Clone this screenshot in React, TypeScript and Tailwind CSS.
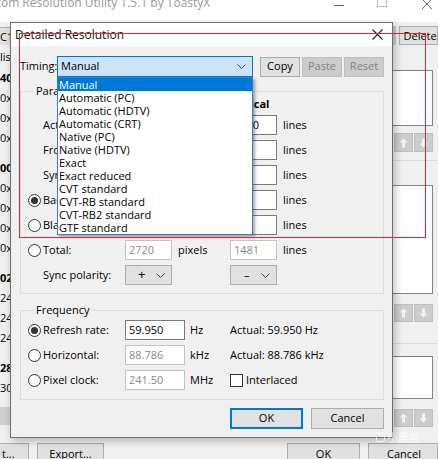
import React from 'react';

const timings = [
  'Manual',
  'Automatic (PC)',
  'Automatic (HDTV)',
  'Automatic (CRT)',
  'Native (PC)',
  'Native (HDTV)',
  'Exact',
  'Exact reduced',
  'CVT standard',
  'CVT-RB standard',
  'CVT-RB2 standard',
  'GTF standard',
];

const paramRows = [
  { label: 'Active:', h: '2560', v: '1440' },
  { label: 'Front porch:', h: '48', v: '3' },
  { label: 'Sync width:', h: '32', v: '5' },
  { label: 'Back porch:', h: '80', v: '33', radio: true, checked: true },
  { label: 'Blanking:', h: '160', v: '41', radio: true },
];

function Radio({ checked }: { checked?: boolean }) {
  return (
    <span className="w-[13px] h-[13px] rounded-full border border-[#333] bg-white flex items-center justify-center shrink-0">
      {checked && <span className="w-[7px] h-[7px] rounded-full bg-[#333]" />}
    </span>
  );
}

function Chevron() {
  return (
    <svg width="9" height="5" viewBox="0 0 9 5" className="shrink-0">
      <path d="M0.5 0.5 L4.5 4.5 L8.5 0.5" fill="none" stroke="#444" strokeWidth="1" />
    </svg>
  );
}

function Field({ value, w, disabled }: { value: string; w: string; disabled?: boolean }) {
  return (
    <div
      className={`h-[20px] ${w} bg-white border flex items-center pl-[3px] ${
        disabled ? 'border-[#c4c4c4] text-[#8a8a8a]' : 'border-[#7a7a7a] text-black'
      }`}
    >
      {value}
    </div>
  );
}

function Arrow({ down }: { down?: boolean }) {
  return (
    <div className="w-[19px] h-full bg-[#cccccc] border border-[#bfbfbf] flex items-center justify-center">
      <svg width="9" height="10" viewBox="0 0 9 10" className={down ? 'rotate-180' : ''}>
        <path d="M4.5 0.5 L8.5 4.5 L6 4.5 L6 9.5 L3 9.5 L3 4.5 L0.5 4.5 Z" fill="#f2f2f2" />
      </svg>
    </div>
  );
}

function Legend({ children }: { children: React.ReactNode }) {
  return <legend className="ml-[6px] px-[2px] leading-[14px]">{children}</legend>;
}

export default function App() {
  return (
    <div className="relative w-[438px] h-[459px] overflow-hidden bg-[#f0f0f0] text-[11px] text-black font-['Open_Sans','Noto_Sans',sans-serif]">
      {/* background window */}
      <div className="flex flex-col h-full">
        <div className="h-[22px] bg-white flex items-start overflow-hidden">
          <span className="-mt-[6px] -ml-[24px] text-[12px] text-[#999] whitespace-nowrap">
            Custom Resolution Utility 1.5.1 by ToastyX
          </span>
          <div className="ml-auto flex items-start">
            <div className="mt-[5px] w-[10px] h-px bg-[#666]" />
            <div className="ml-[33px] -mt-[3px] w-[10px] h-[10px] border border-[#bbb]" />
            <svg width="10" height="10" viewBox="0 0 10 10" className="ml-[35px] mr-[6px] -mt-[1px]">
              <path d="M0 0 L10 10 M10 0 L0 10" stroke="#666" strokeWidth="1" />
            </svg>
          </div>
        </div>

        <div className="flex-1 flex">
          {/* left column */}
          <div className="w-[10px] flex flex-col whitespace-nowrap">
            <div className="mt-[5px] h-[18px] bg-[#e1e1e1] border-t border-[#adadad] leading-[17px]">C1</div>
            <div className="mt-[2px] h-[20px] leading-[20px]">lished resolutions</div>
            <div className="mt-[1px] h-[20px] leading-[20px] font-bold">40 (native)</div>
            <div className="h-[20px] leading-[20px]">0x1440 @ 59.950 Hz</div>
            <div className="h-[20px] leading-[20px]">0x1440 @ 144 Hz</div>
            <div className="h-[20px] leading-[20px]">0x1440 @ 120 Hz</div>
            <div className="mt-[10px] h-[20px] leading-[20px] font-bold">00 Hz</div>
            <div className="h-[20px] leading-[20px]">0x1080 @ 60 Hz</div>
            <div className="h-[20px] leading-[20px]">0x1080 @ 75 Hz</div>
            <div className="h-[20px] leading-[20px]">0x1200 @ 60 Hz</div>
            <div className="h-[20px] leading-[20px]">0x1050 @ 60 Hz</div>
            <div className="mt-[10px] h-[20px] leading-[20px] font-bold">02 Hz</div>
            <div className="h-[20px] leading-[20px]">24x768 @ 60 Hz</div>
            <div className="h-[20px] leading-[20px]">24x768 @ 70 Hz</div>
            <div className="h-[20px] leading-[20px]">24x768 @ 75 Hz</div>
            <div className="mt-[10px] h-[20px] leading-[20px] font-bold">28 Hz</div>
            <div className="h-[20px] leading-[20px]">30x600 @ 60 Hz</div>
            <div className="mt-[9px] h-[18px] bg-[#d0d0d0]" />
          </div>

          <div className="flex-1" />

          {/* right column */}
          <div className="w-[46px] flex flex-col">
            <div className="mt-[4px] h-[19px] flex">
              <div className="-ml-[20px] w-[27px] bg-[#cccccc]" />
              <div className="ml-[3px] w-[42px] bg-[#e1e1e1] border border-[#adadad] pl-[3px] leading-[17px] whitespace-nowrap">
                Delete
              </div>
            </div>
            <div className="mt-[25px] -ml-[20px] w-[61px] h-[56px] bg-white border border-[#828282]" />
            <div className="mt-[7px] ml-[2px] h-[19px] flex gap-[1px]">
              <Arrow />
              <Arrow down />
            </div>
            <div className="mt-[8px] h-px bg-[#dadada]" />
            <div className="mt-[24px] -ml-[20px] w-[61px] h-[109px] bg-white border border-[#828282]" />
            <div className="mt-[10px] ml-[2px] h-[18px] flex gap-[1px]">
              <Arrow />
              <Arrow down />
            </div>
            <div className="mt-[21px] h-px bg-[#dadada]" />
            <div className="mt-[12px] -ml-[20px] w-[61px] h-[43px] bg-white border border-[#828282]" />
            <div className="mt-[10px] ml-[2px] h-[18px] flex gap-[1px]">
              <Arrow />
              <Arrow down />
            </div>
          </div>
        </div>

        <div className="h-[16px] flex items-start">
          <div className="-ml-px w-[30px] h-[23px] bg-[#e1e1e1] border border-[#adadad] pl-[2px] leading-[20px]">t...</div>
          <div className="ml-[8px] w-[67px] h-[23px] bg-[#e1e1e1] border border-[#adadad] text-center leading-[20px]">Export...</div>
          <div className="ml-auto w-[73px] h-[23px] bg-[#e1e1e1] border border-[#adadad] text-center leading-[20px]">OK</div>
          <div className="ml-[8px] w-[70px] h-[23px] bg-[#e1e1e1] border border-[#adadad] pl-[18px] leading-[20px]">Cancel</div>
        </div>
      </div>

      {/* dialog window */}
      <div className="absolute left-[10px] top-[22px] w-[383px] h-[416px] border border-[#6e6e6e] bg-[#f0f0f0] flex flex-col shadow-[2px_3px_8px_rgba(0,0,0,0.25)]">
        <div className="h-[23px] bg-white flex items-center pl-[4px]">
          <span className="text-[12px] text-[#111]">Detailed Resolution</span>
          <svg width="11" height="11" viewBox="0 0 11 11" className="ml-auto mr-[9px]">
            <path d="M0.5 0.5 L10.5 10.5 M10.5 0.5 L0.5 10.5" stroke="#222" strokeWidth="1.1" />
          </svg>
        </div>

        <div className="flex-1 flex flex-col pl-[9px]">
          {/* timing row */}
          <div className="mt-[10px] h-[21px] flex items-center">
            <span className="w-[37px]">Timing:</span>
            <div className="relative w-[196px] h-[21px]">
              <div className="h-full bg-[#cce4f7] border border-[#0078d7] flex items-center pl-[3px] pr-[6px]">
                <span className="flex-1">Manual</span>
                <Chevron />
              </div>
              <div className="absolute top-[21px] left-0 w-[196px] bg-white border border-[#3c7fc0] shadow-[2px_2px_3px_rgba(0,0,0,0.35)] z-10">
                {timings.map((t, i) => (
                  <div
                    key={t}
                    className={`h-[13px] leading-[13px] pl-[1px] whitespace-nowrap ${
                      i === 0 ? 'bg-[#0078d7] text-white' : ''
                    }`}
                  >
                    {t}
                  </div>
                ))}
              </div>
            </div>
            <div className="ml-[7px] w-[40px] h-[20px] bg-[#e1e1e1] border border-[#adadad] flex items-center justify-center">Copy</div>
            <div className="ml-[2px] w-[40px] h-[20px] bg-[#cccccc] border border-[#bfbfbf] text-[#838383] flex items-center justify-center">Paste</div>
            <div className="ml-[2px] w-[40px] h-[20px] bg-[#cccccc] border border-[#bfbfbf] text-[#838383] flex items-center justify-center">Reset</div>
          </div>

          {/* parameters */}
          <fieldset className="mt-[7px] w-[364px] border border-[#dcdcdc] pl-[7px] pb-[8px]">
            <Legend>Parameters</Legend>
            <div className="grid grid-cols-[97px_47px_58px_47px_1fr] items-center">
              <div className="h-[12px]" />
              <div className="font-bold leading-[12px]">Horizontal</div>
              <div />
              <div className="-ml-[3px] font-bold leading-[12px]">Vertical</div>
              <div />
            </div>
            <div className="mt-[5px] flex flex-col gap-[5px]">
              {paramRows.map((r) => (
                <div key={r.label} className="grid grid-cols-[97px_47px_58px_47px_1fr] items-center h-[20px]">
                  {r.radio ? (
                    <div className="flex items-center gap-[2px]">
                      <Radio checked={r.checked} />
                      <span>{r.label}</span>
                    </div>
                  ) : (
                    <span className="pl-[15px]">{r.label}</span>
                  )}
                  <Field value={r.h} w="w-[47px]" />
                  <span className="pl-[6px]">pixels</span>
                  <Field value={r.v} w="w-[47px]" />
                  <span className="pl-[6px]">lines</span>
                </div>
              ))}
              <div className="grid grid-cols-[97px_47px_58px_47px_1fr] items-center h-[20px]">
                <div className="flex items-center gap-[2px]">
                  <Radio />
                  <span>Total:</span>
                </div>
                <Field value="2720" w="w-[47px]" disabled />
                <span className="pl-[6px]">pixels</span>
                <Field value="1481" w="w-[47px]" disabled />
                <span className="pl-[6px]">lines</span>
              </div>
              <div className="grid grid-cols-[97px_47px_58px_47px_1fr] items-center h-[20px]">
                <span className="pl-[15px]">Sync polarity:</span>
                <div className="h-[20px] bg-[#e1e1e1] border border-[#adadad] flex items-center pl-[12px] pr-[6px]">
                  <span className="flex-1 text-[13px]">+</span>
                  <Chevron />
                </div>
                <div />
                <div className="h-[20px] bg-[#e1e1e1] border border-[#adadad] flex items-center pl-[13px] pr-[6px]">
                  <span className="flex-1">–</span>
                  <Chevron />
                </div>
                <div />
              </div>
            </div>
          </fieldset>

          {/* frequency */}
          <fieldset className="mt-[9px] w-[364px] border border-[#dcdcdc] pl-[7px] pt-[3px] pb-[9px]">
            <Legend>Frequency</Legend>
            <div className="flex flex-col gap-[5px]">
              <div className="grid grid-cols-[97px_60px_45px_1fr] items-center h-[20px]">
                <div className="flex items-center gap-[2px]">
                  <Radio checked />
                  <span>Refresh rate:</span>
                </div>
                <Field value="59.950" w="w-[60px]" />
                <span className="pl-[5px]">Hz</span>
                <span>Actual: 59.950 Hz</span>
              </div>
              <div className="grid grid-cols-[97px_60px_45px_1fr] items-center h-[20px]">
                <div className="flex items-center gap-[2px]">
                  <Radio />
                  <span>Horizontal:</span>
                </div>
                <Field value="88.786" w="w-[60px]" disabled />
                <span className="pl-[5px]">kHz</span>
                <span>Actual: 88.786 kHz</span>
              </div>
              <div className="grid grid-cols-[97px_60px_45px_1fr] items-center h-[20px]">
                <div className="flex items-center gap-[2px]">
                  <Radio />
                  <span>Pixel clock:</span>
                </div>
                <Field value="241.50" w="w-[60px]" disabled />
                <span className="pl-[5px]">MHz</span>
                <div className="flex items-center gap-[3px]">
                  <span className="w-[13px] h-[13px] border border-[#333] bg-white" />
                  <span>Interlaced</span>
                </div>
              </div>
            </div>
          </fieldset>

          {/* buttons */}
          <div className="mt-[8px] flex pl-[210px]">
            <div className="w-[73px] h-[21px] bg-[#e1e1e1] border-2 border-[#0078d7] flex items-center justify-center">OK</div>
            <div className="ml-[8px] w-[73px] h-[21px] bg-[#e1e1e1] border border-[#adadad] flex items-center justify-center">Cancel</div>
          </div>
        </div>
      </div>

      {/* annotation rectangle */}
      <div className="absolute left-[19px] top-[33px] w-[407px] h-[205px] shadow-[inset_0_0_0_1px_#e4262a] pointer-events-none z-20" />

      {/* watermark */}
      <div className="absolute left-[376px] top-[429px] flex items-center gap-[2px] text-[11px] text-white/70 font-['Noto_Sans_CJK_SC',sans-serif]">
        <span className="w-[9px] h-[9px] rounded-[2px] border border-white/70" />
        <span>小黑盒</span>
      </div>
    </div>
  );
}
